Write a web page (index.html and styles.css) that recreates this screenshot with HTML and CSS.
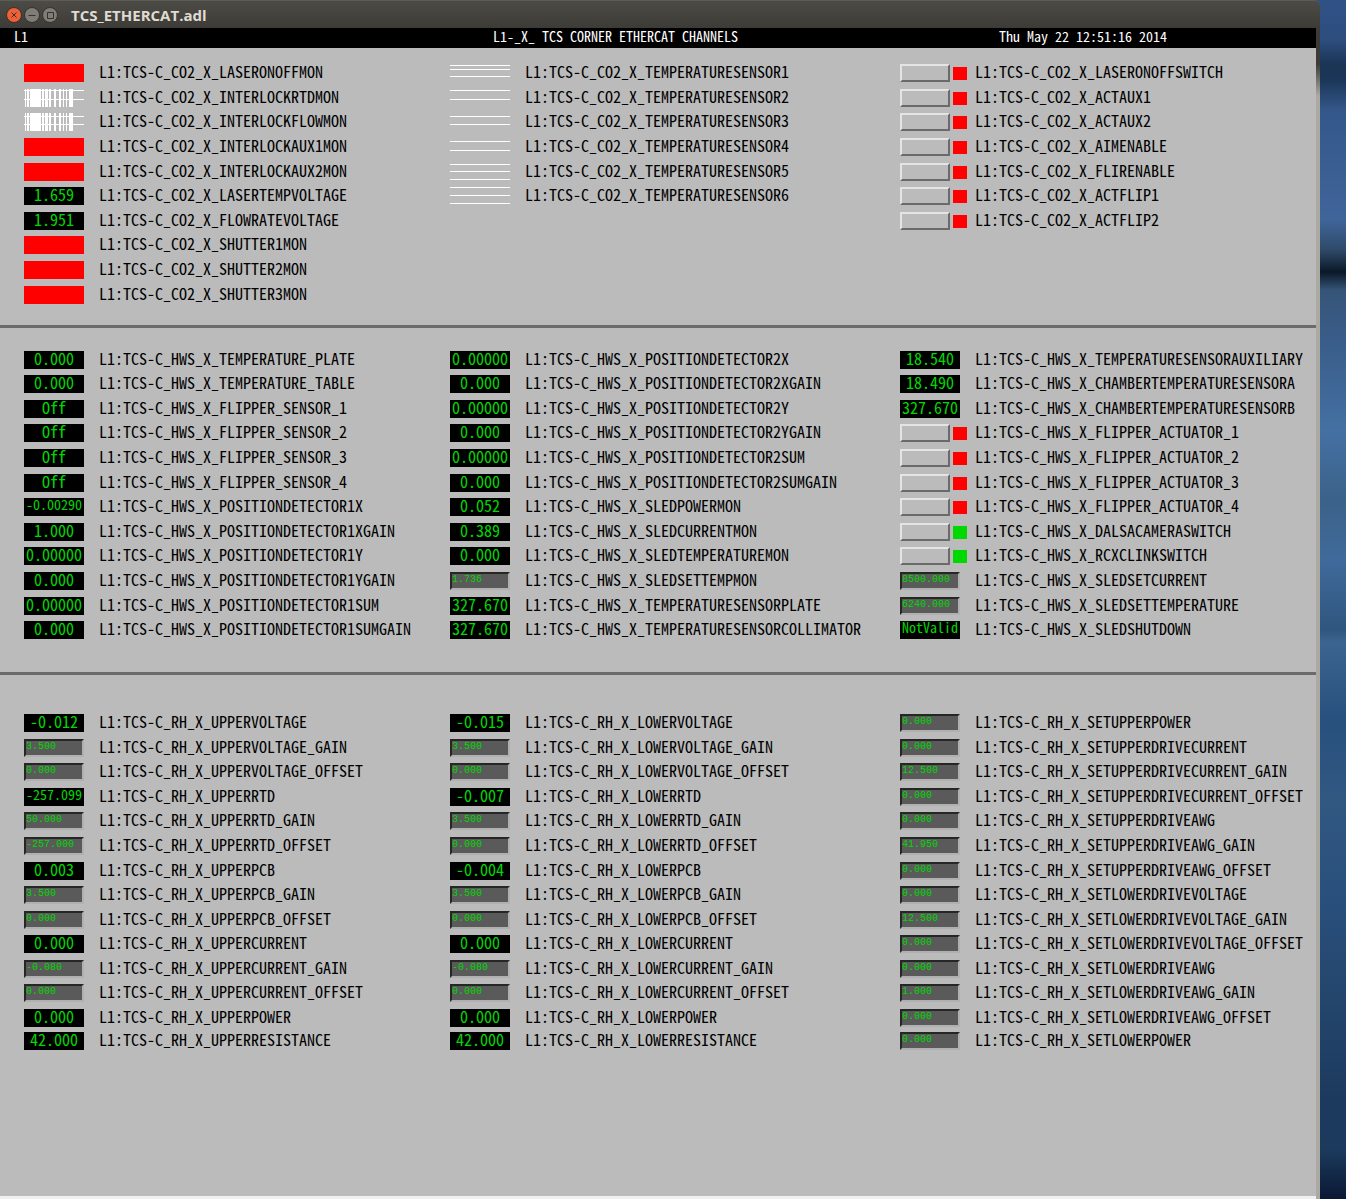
FILE: index.html
```html
<!DOCTYPE html>
<html lang="en">
<head>
<meta charset="utf-8">
<title>TCS_ETHERCAT.adl</title>
<link rel="stylesheet" href="styles.css">
</head>
<body>
<div class="window">
  <header class="titlebar">
    <div class="window-buttons">
      <button class="window-button close" type="button" aria-label="Close"><svg viewBox="0 0 16 16"><circle cx="8" cy="8" r="7.5"/><path d="M5.5 5.5l5 5M10.5 5.5l-5 5"/></svg></button>
      <button class="window-button" type="button" aria-label="Minimize"><svg viewBox="0 0 16 16"><circle cx="8" cy="8" r="7.5"/><path d="M4.500 8.500h7"/></svg></button>
      <button class="window-button" type="button" aria-label="Maximize"><svg viewBox="0 0 16 16"><circle cx="8" cy="8" r="7.5"/><path d="M5.500 5.500h6v6h-6z"/></svg></button>
    </div>
    <h1 class="window-title">TCS_ETHERCAT.adl</h1>
  </header>
  <div class="frame">
  <main class="screen">
    <div class="banner">
      <span>L1</span>
      <span>L1-_X_ TCS CORNER ETHERCAT CHANNELS</span>
      <time datetime="2014-05-22T12:51:16">Thu May 22 12:51:16 2014</time>
    </div>

    <section class="panel co2">
      <div class="group">
        <div class="channel"><span class="block"></span><span class="name">L1:TCS-C_CO2_X_LASERONOFFMON</span></div>
        <div class="channel"><svg class="trace" viewBox="0 0 60 18"><path d="M0 1h60v1H0zM0 10h60v1H0zM1 0h1v18H1zM3 0h2v18H3zM6 0h11v18H6zM18 0h2v18h-2zM21 0h3v18h-3zM25 0h2v18h-2zM30 0h2v18h-2zM35 0h2v18h-2zM39 0h1v18h-1zM42 0h1v18h-1zM45 0h4v18h-4z"/></svg><span class="name">L1:TCS-C_CO2_X_INTERLOCKRTDMON</span></div>
        <div class="channel"><svg class="trace" viewBox="0 0 60 18"><path d="M0 3h60v1H0zM0 11h60v1H0zM1 0h1v18H1zM3 0h2v18H3zM6 0h11v18H6zM18 0h2v18h-2zM21 0h3v18h-3zM25 0h2v18h-2zM30 0h2v18h-2zM35 0h2v18h-2zM39 0h1v18h-1zM42 0h1v18h-1zM45 0h4v18h-4z"/></svg><span class="name">L1:TCS-C_CO2_X_INTERLOCKFLOWMON</span></div>
        <div class="channel"><span class="block"></span><span class="name">L1:TCS-C_CO2_X_INTERLOCKAUX1MON</span></div>
        <div class="channel"><span class="block"></span><span class="name">L1:TCS-C_CO2_X_INTERLOCKAUX2MON</span></div>
        <label class="channel"><output class="readout">1.659</output><span class="name">L1:TCS-C_CO2_X_LASERTEMPVOLTAGE</span></label>
        <label class="channel"><output class="readout">1.951</output><span class="name">L1:TCS-C_CO2_X_FLOWRATEVOLTAGE</span></label>
        <div class="channel"><span class="block"></span><span class="name">L1:TCS-C_CO2_X_SHUTTER1MON</span></div>
        <div class="channel"><span class="block"></span><span class="name">L1:TCS-C_CO2_X_SHUTTER2MON</span></div>
        <div class="channel"><span class="block"></span><span class="name">L1:TCS-C_CO2_X_SHUTTER3MON</span></div>
      </div>
      <div class="group">
        <div class="channel"><svg class="trace" viewBox="0 0 60 18"><path d="M0 1h60v1H0zM0 5h60v1H0zM0 12h60v1H0z"/></svg><span class="name">L1:TCS-C_CO2_X_TEMPERATURESENSOR1</span></div>
        <div class="channel"><svg class="trace" viewBox="0 0 60 18"><path d="M0 1h60v1H0zM0 10h60v1H0z"/></svg><span class="name">L1:TCS-C_CO2_X_TEMPERATURESENSOR2</span></div>
        <div class="channel"><svg class="trace" viewBox="0 0 60 18"><path d="M0 3h60v1H0zM0 11h60v1H0z"/></svg><span class="name">L1:TCS-C_CO2_X_TEMPERATURESENSOR3</span></div>
        <div class="channel"><svg class="trace" viewBox="0 0 60 18"><path d="M0 3h60v1H0zM0 12h60v1H0z"/></svg><span class="name">L1:TCS-C_CO2_X_TEMPERATURESENSOR4</span></div>
        <div class="channel"><svg class="trace" viewBox="0 0 60 18"><path d="M0 1h60v1H0zM0 8h60v1H0zM0 16h60v1H0z"/></svg><span class="name">L1:TCS-C_CO2_X_TEMPERATURESENSOR5</span></div>
        <div class="channel"><svg class="trace" viewBox="0 0 60 18"><path d="M0 0h60v1H0zM0 8h60v1H0zM0 16h60v1H0z"/></svg><span class="name">L1:TCS-C_CO2_X_TEMPERATURESENSOR6</span></div>
      </div>
      <div class="group">
        <label class="channel"><span class="switch"><button class="toggle" type="button"></button><i class="led"></i></span><span class="name">L1:TCS-C_CO2_X_LASERONOFFSWITCH</span></label>
        <label class="channel"><span class="switch"><button class="toggle" type="button"></button><i class="led"></i></span><span class="name">L1:TCS-C_CO2_X_ACTAUX1</span></label>
        <label class="channel"><span class="switch"><button class="toggle" type="button"></button><i class="led"></i></span><span class="name">L1:TCS-C_CO2_X_ACTAUX2</span></label>
        <label class="channel"><span class="switch"><button class="toggle" type="button"></button><i class="led"></i></span><span class="name">L1:TCS-C_CO2_X_AIMENABLE</span></label>
        <label class="channel"><span class="switch"><button class="toggle" type="button"></button><i class="led"></i></span><span class="name">L1:TCS-C_CO2_X_FLIRENABLE</span></label>
        <label class="channel"><span class="switch"><button class="toggle" type="button"></button><i class="led"></i></span><span class="name">L1:TCS-C_CO2_X_ACTFLIP1</span></label>
        <label class="channel"><span class="switch"><button class="toggle" type="button"></button><i class="led"></i></span><span class="name">L1:TCS-C_CO2_X_ACTFLIP2</span></label>
      </div>
    </section>

    <section class="panel hws">
      <div class="group">
        <label class="channel"><output class="readout">0.000</output><span class="name">L1:TCS-C_HWS_X_TEMPERATURE_PLATE</span></label>
        <label class="channel"><output class="readout">0.000</output><span class="name">L1:TCS-C_HWS_X_TEMPERATURE_TABLE</span></label>
        <label class="channel"><output class="readout">Off</output><span class="name">L1:TCS-C_HWS_X_FLIPPER_SENSOR_1</span></label>
        <label class="channel"><output class="readout">Off</output><span class="name">L1:TCS-C_HWS_X_FLIPPER_SENSOR_2</span></label>
        <label class="channel"><output class="readout">Off</output><span class="name">L1:TCS-C_HWS_X_FLIPPER_SENSOR_3</span></label>
        <label class="channel"><output class="readout">Off</output><span class="name">L1:TCS-C_HWS_X_FLIPPER_SENSOR_4</span></label>
        <label class="channel"><output class="readout long">-0.00290</output><span class="name">L1:TCS-C_HWS_X_POSITIONDETECTOR1X</span></label>
        <label class="channel"><output class="readout">1.000</output><span class="name">L1:TCS-C_HWS_X_POSITIONDETECTOR1XGAIN</span></label>
        <label class="channel"><output class="readout">0.00000</output><span class="name">L1:TCS-C_HWS_X_POSITIONDETECTOR1Y</span></label>
        <label class="channel"><output class="readout">0.000</output><span class="name">L1:TCS-C_HWS_X_POSITIONDETECTOR1YGAIN</span></label>
        <label class="channel"><output class="readout">0.00000</output><span class="name">L1:TCS-C_HWS_X_POSITIONDETECTOR1SUM</span></label>
        <label class="channel"><output class="readout">0.000</output><span class="name">L1:TCS-C_HWS_X_POSITIONDETECTOR1SUMGAIN</span></label>
      </div>
      <div class="group">
        <label class="channel"><output class="readout">0.00000</output><span class="name">L1:TCS-C_HWS_X_POSITIONDETECTOR2X</span></label>
        <label class="channel"><output class="readout">0.000</output><span class="name">L1:TCS-C_HWS_X_POSITIONDETECTOR2XGAIN</span></label>
        <label class="channel"><output class="readout">0.00000</output><span class="name">L1:TCS-C_HWS_X_POSITIONDETECTOR2Y</span></label>
        <label class="channel"><output class="readout">0.000</output><span class="name">L1:TCS-C_HWS_X_POSITIONDETECTOR2YGAIN</span></label>
        <label class="channel"><output class="readout">0.00000</output><span class="name">L1:TCS-C_HWS_X_POSITIONDETECTOR2SUM</span></label>
        <label class="channel"><output class="readout">0.000</output><span class="name">L1:TCS-C_HWS_X_POSITIONDETECTOR2SUMGAIN</span></label>
        <label class="channel"><output class="readout">0.052</output><span class="name">L1:TCS-C_HWS_X_SLEDPOWERMON</span></label>
        <label class="channel"><output class="readout">0.389</output><span class="name">L1:TCS-C_HWS_X_SLEDCURRENTMON</span></label>
        <label class="channel"><output class="readout">0.000</output><span class="name">L1:TCS-C_HWS_X_SLEDTEMPERATUREMON</span></label>
        <label class="channel"><input class="entry" type="text" value="1.736"><span class="name">L1:TCS-C_HWS_X_SLEDSETTEMPMON</span></label>
        <label class="channel"><output class="readout">327.670</output><span class="name">L1:TCS-C_HWS_X_TEMPERATURESENSORPLATE</span></label>
        <label class="channel"><output class="readout">327.670</output><span class="name">L1:TCS-C_HWS_X_TEMPERATURESENSORCOLLIMATOR</span></label>
      </div>
      <div class="group">
        <label class="channel"><output class="readout">18.540</output><span class="name">L1:TCS-C_HWS_X_TEMPERATURESENSORAUXILIARY</span></label>
        <label class="channel"><output class="readout">18.490</output><span class="name">L1:TCS-C_HWS_X_CHAMBERTEMPERATURESENSORA</span></label>
        <label class="channel"><output class="readout">327.670</output><span class="name">L1:TCS-C_HWS_X_CHAMBERTEMPERATURESENSORB</span></label>
        <label class="channel"><span class="switch"><button class="toggle" type="button"></button><i class="led"></i></span><span class="name">L1:TCS-C_HWS_X_FLIPPER_ACTUATOR_1</span></label>
        <label class="channel"><span class="switch"><button class="toggle" type="button"></button><i class="led"></i></span><span class="name">L1:TCS-C_HWS_X_FLIPPER_ACTUATOR_2</span></label>
        <label class="channel"><span class="switch"><button class="toggle" type="button"></button><i class="led"></i></span><span class="name">L1:TCS-C_HWS_X_FLIPPER_ACTUATOR_3</span></label>
        <label class="channel"><span class="switch"><button class="toggle" type="button"></button><i class="led"></i></span><span class="name">L1:TCS-C_HWS_X_FLIPPER_ACTUATOR_4</span></label>
        <label class="channel"><span class="switch"><button class="toggle" type="button"></button><i class="led on"></i></span><span class="name">L1:TCS-C_HWS_X_DALSACAMERASWITCH</span></label>
        <label class="channel"><span class="switch"><button class="toggle" type="button"></button><i class="led on"></i></span><span class="name">L1:TCS-C_HWS_X_RCXCLINKSWITCH</span></label>
        <label class="channel"><input class="entry" type="text" value="8500.000"><span class="name">L1:TCS-C_HWS_X_SLEDSETCURRENT</span></label>
        <label class="channel"><input class="entry" type="text" value="6240.000"><span class="name">L1:TCS-C_HWS_X_SLEDSETTEMPERATURE</span></label>
        <label class="channel"><output class="readout long">NotValid</output><span class="name">L1:TCS-C_HWS_X_SLEDSHUTDOWN</span></label>
      </div>
    </section>

    <section class="panel rh">
      <div class="group">
        <label class="channel"><output class="readout">-0.012</output><span class="name">L1:TCS-C_RH_X_UPPERVOLTAGE</span></label>
        <label class="channel"><input class="entry" type="text" value="3.500"><span class="name">L1:TCS-C_RH_X_UPPERVOLTAGE_GAIN</span></label>
        <label class="channel"><input class="entry" type="text" value="0.000"><span class="name">L1:TCS-C_RH_X_UPPERVOLTAGE_OFFSET</span></label>
        <label class="channel"><output class="readout long">-257.099</output><span class="name">L1:TCS-C_RH_X_UPPERRTD</span></label>
        <label class="channel"><input class="entry" type="text" value="50.000"><span class="name">L1:TCS-C_RH_X_UPPERRTD_GAIN</span></label>
        <label class="channel"><input class="entry" type="text" value="-257.000"><span class="name">L1:TCS-C_RH_X_UPPERRTD_OFFSET</span></label>
        <label class="channel"><output class="readout">0.003</output><span class="name">L1:TCS-C_RH_X_UPPERPCB</span></label>
        <label class="channel"><input class="entry" type="text" value="3.500"><span class="name">L1:TCS-C_RH_X_UPPERPCB_GAIN</span></label>
        <label class="channel"><input class="entry" type="text" value="0.000"><span class="name">L1:TCS-C_RH_X_UPPERPCB_OFFSET</span></label>
        <label class="channel"><output class="readout">0.000</output><span class="name">L1:TCS-C_RH_X_UPPERCURRENT</span></label>
        <label class="channel"><input class="entry" type="text" value="-0.080"><span class="name">L1:TCS-C_RH_X_UPPERCURRENT_GAIN</span></label>
        <label class="channel"><input class="entry" type="text" value="0.000"><span class="name">L1:TCS-C_RH_X_UPPERCURRENT_OFFSET</span></label>
        <label class="channel"><output class="readout">0.000</output><span class="name">L1:TCS-C_RH_X_UPPERPOWER</span></label>
        <label class="channel"><output class="readout">42.000</output><span class="name">L1:TCS-C_RH_X_UPPERRESISTANCE</span></label>
      </div>
      <div class="group">
        <label class="channel"><output class="readout">-0.015</output><span class="name">L1:TCS-C_RH_X_LOWERVOLTAGE</span></label>
        <label class="channel"><input class="entry" type="text" value="3.500"><span class="name">L1:TCS-C_RH_X_LOWERVOLTAGE_GAIN</span></label>
        <label class="channel"><input class="entry" type="text" value="0.000"><span class="name">L1:TCS-C_RH_X_LOWERVOLTAGE_OFFSET</span></label>
        <label class="channel"><output class="readout">-0.007</output><span class="name">L1:TCS-C_RH_X_LOWERRTD</span></label>
        <label class="channel"><input class="entry" type="text" value="3.500"><span class="name">L1:TCS-C_RH_X_LOWERRTD_GAIN</span></label>
        <label class="channel"><input class="entry" type="text" value="0.000"><span class="name">L1:TCS-C_RH_X_LOWERRTD_OFFSET</span></label>
        <label class="channel"><output class="readout">-0.004</output><span class="name">L1:TCS-C_RH_X_LOWERPCB</span></label>
        <label class="channel"><input class="entry" type="text" value="3.500"><span class="name">L1:TCS-C_RH_X_LOWERPCB_GAIN</span></label>
        <label class="channel"><input class="entry" type="text" value="0.000"><span class="name">L1:TCS-C_RH_X_LOWERPCB_OFFSET</span></label>
        <label class="channel"><output class="readout">0.000</output><span class="name">L1:TCS-C_RH_X_LOWERCURRENT</span></label>
        <label class="channel"><input class="entry" type="text" value="-0.080"><span class="name">L1:TCS-C_RH_X_LOWERCURRENT_GAIN</span></label>
        <label class="channel"><input class="entry" type="text" value="0.000"><span class="name">L1:TCS-C_RH_X_LOWERCURRENT_OFFSET</span></label>
        <label class="channel"><output class="readout">0.000</output><span class="name">L1:TCS-C_RH_X_LOWERPOWER</span></label>
        <label class="channel"><output class="readout">42.000</output><span class="name">L1:TCS-C_RH_X_LOWERRESISTANCE</span></label>
      </div>
      <div class="group">
        <label class="channel"><input class="entry" type="text" value="0.000"><span class="name">L1:TCS-C_RH_X_SETUPPERPOWER</span></label>
        <label class="channel"><input class="entry" type="text" value="0.000"><span class="name">L1:TCS-C_RH_X_SETUPPERDRIVECURRENT</span></label>
        <label class="channel"><input class="entry" type="text" value="12.500"><span class="name">L1:TCS-C_RH_X_SETUPPERDRIVECURRENT_GAIN</span></label>
        <label class="channel"><input class="entry" type="text" value="0.000"><span class="name">L1:TCS-C_RH_X_SETUPPERDRIVECURRENT_OFFSET</span></label>
        <label class="channel"><input class="entry" type="text" value="0.000"><span class="name">L1:TCS-C_RH_X_SETUPPERDRIVEAWG</span></label>
        <label class="channel"><input class="entry" type="text" value="41.950"><span class="name">L1:TCS-C_RH_X_SETUPPERDRIVEAWG_GAIN</span></label>
        <label class="channel"><input class="entry" type="text" value="0.000"><span class="name">L1:TCS-C_RH_X_SETUPPERDRIVEAWG_OFFSET</span></label>
        <label class="channel"><input class="entry" type="text" value="0.000"><span class="name">L1:TCS-C_RH_X_SETLOWERDRIVEVOLTAGE</span></label>
        <label class="channel"><input class="entry" type="text" value="12.500"><span class="name">L1:TCS-C_RH_X_SETLOWERDRIVEVOLTAGE_GAIN</span></label>
        <label class="channel"><input class="entry" type="text" value="0.000"><span class="name">L1:TCS-C_RH_X_SETLOWERDRIVEVOLTAGE_OFFSET</span></label>
        <label class="channel"><input class="entry" type="text" value="0.000"><span class="name">L1:TCS-C_RH_X_SETLOWERDRIVEAWG</span></label>
        <label class="channel"><input class="entry" type="text" value="1.000"><span class="name">L1:TCS-C_RH_X_SETLOWERDRIVEAWG_GAIN</span></label>
        <label class="channel"><input class="entry" type="text" value="0.000"><span class="name">L1:TCS-C_RH_X_SETLOWERDRIVEAWG_OFFSET</span></label>
        <label class="channel"><input class="entry" type="text" value="0.000"><span class="name">L1:TCS-C_RH_X_SETLOWERPOWER</span></label>
      </div>
    </section>
  </main>
  </div>
</div>
</body>
</html>
```

FILE: styles.css
```css
* {
  box-sizing: border-box;
}

/* Desktop wallpaper, seen to the right of the window */
body {
  margin: 0;
  min-height: 100vh;
  padding-right: 26px;
  background: linear-gradient(#305286 0, #2d4d7e 40px, #1a3454 65px, #1b3658 80px, #34578a 110px, #40659a 220px, #2e4a68 250px, #0b1828 272px, #365478 290px, #3a5f8c 350px, #4470a3 430px, #3b6289 500px, #406a9b 560px, #2f567e 630px, #3b6590 642px, #28507e 720px, #315881 800px, #294f7c 900px, #24466c 1000px, #1c3a5e 1100px, #1b3a5c 1150px, #0a1834 1199px);
  font-family: "Noto Sans Mono CJK JP", "Noto Sans CJK JP", "Liberation Mono", monospace;
}

.window {
  display: flex;
  flex-direction: column;
  min-height: 100vh;
}

.titlebar {
  display: flex;
  align-items: center;
  gap: 13px;
  height: 28px;
  padding-left: 6px;
  border-top: 1px solid #5c5b54;
  border-top-right-radius: 6px;
  background: linear-gradient(#4c4b45, #3c3b37);
}

.window-buttons {
  display: flex;
  gap: 2px;
}

.window-button {
  width: 16px;
  height: 16px;
  padding: 0;
  border: 0;
  background: none;
}

.window-button svg {
  display: block;
  fill: #7f7d76;
  stroke: #33322e;
}

.window-button.close svg {
  fill: #ee6038;
}

.window-button path {
  fill: none;
}

.window-title {
  margin: 0;
  font: 700 15px/20px "Open Sans", sans-serif;
  color: #dfdbd2;
}

.frame {
  display: flex;
  flex: 1;
  padding-right: 4px;
  background: linear-gradient(#3c3b37 36px, #aca9a3 68px);
}

.screen {
  flex: 1;
  border-bottom: 3px solid #f0f0f0;
  background: #bbb;
}

.banner {
  display: grid;
  grid-template-columns: 479fr 506fr 317fr;
  height: 20px;
  padding-left: 14px;
  background: #000;
  color: #fff;
  font-size: 14px;
  line-height: 16px;
}

.panel {
  display: grid;
  grid-template-columns: 426fr 450fr 416fr;
  padding-left: 24px;
}

.co2 {
  padding-top: 16px;
  padding-bottom: 15px;
  border-bottom: 3px solid #6b6b6b;
}

.hws {
  padding-top: 23px;
  padding-bottom: 26px;
  border-bottom: 3px solid #6b6b6b;
}

.rh {
  padding-top: 39px;
}

.group {
  display: grid;
  align-content: start;
}

.co2 .group {
  grid-auto-rows: 25px 24px 25px 25px 24px;
}

.hws .group {
  grid-auto-rows: 24px 25px 24px 25px 25px;
}

.rh .group {
  grid-template-rows: repeat(2, 25px 24px 25px 24px 25px) 24px 25px 23px 25px;
}

.channel {
  display: grid;
  grid-template-columns: 75px auto;
  align-items: start;
  justify-content: start;
}

.name {
  font-size: 16px;
  line-height: 14px;
  white-space: nowrap;
}

.block,
.readout,
.trace,
.entry {
  display: block;
  width: 60px;
  height: 18px;
}

.block {
  background: #f00;
}

.readout {
  background: #000;
  color: #00d800;
  font-size: 16px;
  line-height: 14px;
  text-align: center;
}

.readout.long {
  font-size: 14px;
  line-height: 12px;
}

.trace {
  fill: #fff;
  shape-rendering: crispEdges;
}

.entry {
  padding: 0 0 4px;
  border: 2px solid;
  border-color: #262626 #b0b0b0 #b0b0b0 #262626;
  border-radius: 0;
  background: #5a5a5a;
  color: #00d800;
  font: 10px "Liberation Mono", monospace;
}

.switch {
  display: flex;
  gap: 3px;
}

.toggle {
  width: 50px;
  height: 18px;
  padding: 0;
  border: 2px solid;
  border-color: #e4e4e4 #6a6a6a #6a6a6a #e4e4e4;
  border-radius: 0;
  background: #bbb;
}

.led {
  width: 14px;
  height: 13px;
  margin-top: 3px;
  background: #f00;
}

.led.on {
  background: #00d800;
}
```
